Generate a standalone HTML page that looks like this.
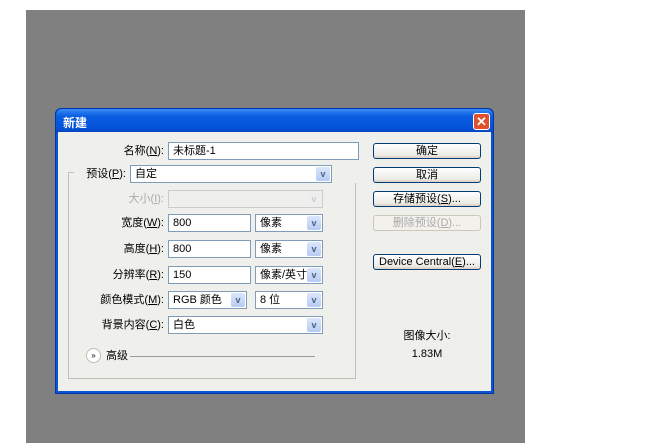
<!DOCTYPE html>
<html><head><meta charset="utf-8"><style>
*{box-sizing:border-box;margin:0;padding:0}
body{width:661px;height:443px;background:#fff;position:relative;overflow:hidden;font-family:"Liberation Sans","Noto Sans CJK SC",sans-serif;font-size:11px;color:#000}
.a{position:absolute}
#gray{left:26px;top:10px;width:499px;height:433px;background:#808080}
#dlg{left:55px;top:108px;width:439px;height:286px;background:#0a55d6;border-radius:6px 6px 0 0;border:1px solid #0036a8}
#title{left:0;top:0;width:437px;height:24px;background:linear-gradient(#3a8cf5,#0a5de0 30%,#0452d8 80%,#0842b8);border-radius:6px 6px 0 0}
#body{left:3px;top:24px;width:431px;height:257px;background:#efefeb}
.lbl{text-align:right;width:90px;line-height:18px}
.inp{background:#fff;border:1px solid #7f9db9;line-height:16px;padding-left:4px}
.sel{background:#fff;border:1px solid #7f9db9;line-height:16px;padding-left:4px}
.sel i{position:absolute;right:1px;top:1px;width:14px;height:14px;background:linear-gradient(#dbe6fb,#b6cbf3);border-radius:2px;font-style:normal;color:#4d6185;font-size:9px;text-align:center;line-height:14px;font-weight:bold}
.btn{width:108px;height:16px;border:1px solid #003c74;border-radius:3px;background:linear-gradient(#fff,#ecebe6 80%,#d6d0c5);text-align:center;line-height:14px}
u{text-decoration:underline}
</style></head><body>
<div class="a" id="gray"></div>
<div class="a" id="dlg">
 <div class="a" id="title"><span class="a" style="left:7px;top:5px;color:#fff;font-weight:bold;font-size:12px">新建</span>
  <div class="a" style="left:417px;top:4px;width:17px;height:17px;background:#e0502a;border:1px solid #fff;border-radius:3px;color:#fff;text-align:center;line-height:15px;font-size:13px;font-weight:bold">✕</div></div>
</div>
<!-- body content absolute on page -->
<div class="a" style="left:58px;top:132px;width:433px;height:259px;background:#efefeb"></div>
<div class="a" style="left:68px;top:172px;width:288px;height:207px;border:1px solid #c0c0b8"></div>
<div class="a lbl" style="left:74px;top:142px">名称(<u>N</u>):</div>
<div class="a inp" style="left:168px;top:142px;width:191px;height:18px">未标题-1</div>
<div class="a" style="left:74px;top:165px;width:290px;height:18px;background:#efefeb"></div>
<div class="a lbl" style="left:36px;top:165px">预设(<u>P</u>):</div>
<div class="a sel" style="left:130px;top:165px;width:202px;height:18px">自定<i>v</i></div>
<div class="a lbl" style="left:74px;top:190px;color:#aaa">大小(<u>I</u>):</div>
<div class="a sel" style="left:168px;top:190px;width:155px;height:18px;background:#efefeb;border-color:#ccc"><i style="background:#eee;color:#ccc">v</i></div>
<div class="a lbl" style="left:74px;top:214px">宽度(<u>W</u>):</div>
<div class="a inp" style="left:168px;top:214px;width:83px;height:18px">800</div>
<div class="a sel" style="left:255px;top:214px;width:68px;height:18px">像素<i>v</i></div>
<div class="a lbl" style="left:74px;top:240px">高度(<u>H</u>):</div>
<div class="a inp" style="left:168px;top:240px;width:83px;height:18px">800</div>
<div class="a sel" style="left:255px;top:240px;width:68px;height:18px">像素<i>v</i></div>
<div class="a lbl" style="left:74px;top:266px">分辨率(<u>R</u>):</div>
<div class="a inp" style="left:168px;top:266px;width:83px;height:18px">150</div>
<div class="a sel" style="left:255px;top:266px;width:68px;height:18px">像素/英寸<i>v</i></div>
<div class="a lbl" style="left:74px;top:291px">颜色模式(<u>M</u>):</div>
<div class="a sel" style="left:168px;top:291px;width:79px;height:18px">RGB 颜色<i>v</i></div>
<div class="a sel" style="left:255px;top:291px;width:68px;height:18px">8 位<i>v</i></div>
<div class="a lbl" style="left:74px;top:316px">背景内容(<u>C</u>):</div>
<div class="a sel" style="left:168px;top:316px;width:155px;height:18px">白色<i>v</i></div>
<div class="a" style="left:86px;top:348px;width:15px;height:15px;border-radius:50%;background:#fff;border:1px solid #bbb;font-size:8px;text-align:center;line-height:13px">»</div>
<div class="a" style="left:106px;top:348px;line-height:16px">高级</div>
<div class="a" style="left:130px;top:356px;width:185px;height:1px;background:#999"></div>
<div class="a btn" style="left:373px;top:143px">确定</div>
<div class="a btn" style="left:373px;top:167px">取消</div>
<div class="a btn" style="left:373px;top:191px">存储预设(<u>S</u>)...</div>
<div class="a btn" style="left:373px;top:215px;border-color:#cac8bb;color:#aaa;background:#f2f1ec">删除预设(<u>D</u>)...</div>
<div class="a btn" style="left:373px;top:254px">Device Central(<u>E</u>)...</div>
<div class="a" style="left:380px;top:327px;width:94px;text-align:center">图像大小:</div>
<div class="a" style="left:380px;top:348px;width:94px;text-align:center">1.83M</div>
</body></html>
